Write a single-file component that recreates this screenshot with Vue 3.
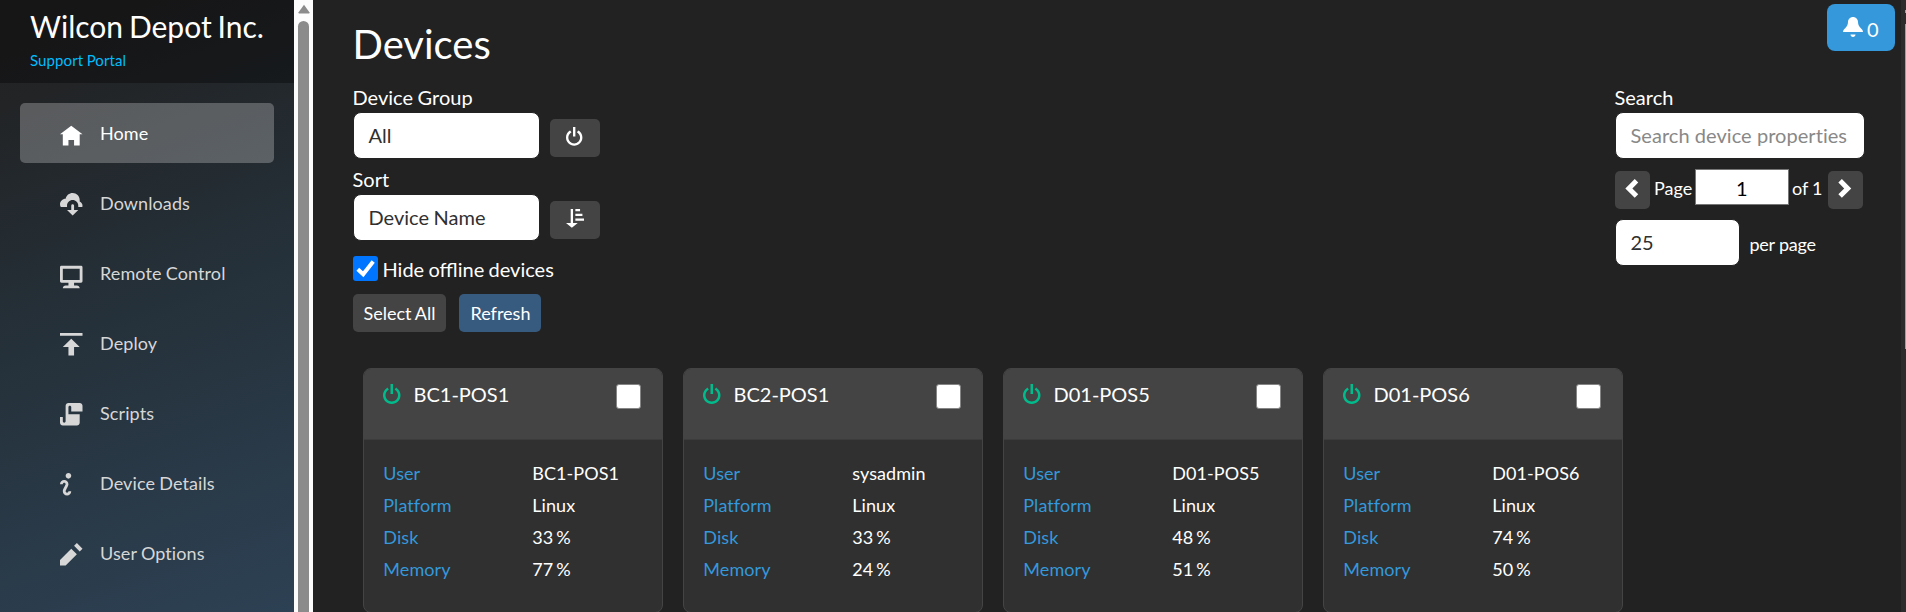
<script setup>
const icons = {
  home: 'M4 1l-4 3h1v4h2v-2h2v2h2v-4.03l1 .03-4-3z',
  download: 'M4.5 0c-1.21 0-2.27.86-2.5 2-1.1 0-2 .9-2 2 0 .37.11.71.28 1h2.22v-.5c0-1.1.9-2 2-2s2 .9 2 2v.5h1.41c.06-.16.09-.32.09-.5 0-.65-.42-1.29-1-1.5v-.5c0-1.38-1.12-2.5-2.5-2.5zm-.16 3.99a.5.5 0 0 0-.34.51v1.5h-1.5l2 2 2-2h-1.5v-1.5a.5.5 0 0 0-.66-.51z',
  monitor: 'M.34 1a.5.5 0 0 0-.34.5v5a.5.5 0 0 0 .5.5h2.5v1h-1c-.55 0-1 .45-1 1h6c0-.55-.45-1-1-1h-1v-1h2.5a.5.5 0 0 0 .5-.5v-5a.5.5 0 0 0-.5-.5h-7.16zm.66 1h6v4h-6v-4z',
  upload: 'M0 0v1h8v-1h-8zm4 2l-3 3h2v3h2v-3h2l-3-3z',
  script: 'M3 0c-.55 0-1 .45-1 1v5.5c0 .28-.22.5-.5.5s-.5-.22-.5-.5v-1.5h-1v2c0 .55.45 1 1 1h5c.55 0 1-.45 1-1v-3h-4v-2.5c0-.28.22-.5.5-.5s.5.22.5.5v1.5h4v-2c0-.55-.45-1-1-1h-4z',
  info: 'M3 0c-.55 0-1 .45-1 1s.45 1 1 1 1-.45 1-1-.45-1-1-1zm-1.5 2.5c-.83 0-1.5.67-1.5 1.5h1c0-.28.22-.5.5-.5s.5.22.5.5-1 1.64-1 2.5c0 .86.67 1.5 1.5 1.5s1.5-.67 1.5-1.5h-1c0 .28-.22.5-.5.5s-.5-.22-.5-.5c0-.36 1-1.84 1-2.5 0-.81-.67-1.5-1.5-1.5z',
  pencil: 'M6 0l-1 1 2 2 1-1-2-2zm-2 2l-4 4v2h2l4-4-2-2z',
  power: 'M3 0v4h1v-4h-1zm-1.28 1.44l-.38.31c-.81.64-1.34 1.64-1.34 2.75 0 1.93 1.57 3.5 3.5 3.5s3.5-1.57 3.5-3.5c0-1.11-.53-2.11-1.34-2.75l-.38-.31-.63.78.38.31c.58.46.97 1.17.97 1.97 0 1.39-1.11 2.5-2.5 2.5s-2.5-1.11-2.5-2.5c0-.8.36-1.51.94-1.97l.41-.31-.63-.78z',
  sort: 'M2 0v6h-2l2.5 2 2.5-2h-2v-6h-1zm2 0v1h2v-1h-2zm0 2v1h3v-1h-3zm0 2v1h4v-1h-4z',
  bell: 'M4 0c-1.1 0-2 .9-2 2 0 1.04-.52 1.98-1.34 2.66-.41.34-.66.82-.66 1.34h8c0-.52-.24-1-.66-1.34-.82-.68-1.34-1.62-1.34-2.66 0-1.1-.89-2-2-2zm-1 7c0 .55.45 1 1 1s1-.45 1-1h-2z',
  left: 'M5 0l-4 4 4 4 1.5-1.5-2.5-2.5 2.5-2.5-1.5-1.5z',
  right: 'M2.5 0l-1.5 1.5 2.5 2.5-2.5 2.5 1.5 1.5 4-4-4-4z'
}
const nav = [
  { text: 'Home', icon: 'home', active: true },
  { text: 'Downloads', icon: 'download' },
  { text: 'Remote Control', icon: 'monitor' },
  { text: 'Deploy', icon: 'upload' },
  { text: 'Scripts', icon: 'script' },
  { text: 'Device Details', icon: 'info' },
  { text: 'User Options', icon: 'pencil' }
]
const devices = [
  { name: 'BC1-POS1', user: 'BC1-POS1', disk: '33 %', memory: '77 %' },
  { name: 'BC2-POS1', user: 'sysadmin', disk: '33 %', memory: '24 %' },
  { name: 'D01-POS5', user: 'D01-POS5', disk: '48 %', memory: '51 %' },
  { name: 'D01-POS6', user: 'D01-POS6', disk: '74 %', memory: '50 %' }
]
</script>

<template>
  <div class="page">
    <aside class="sidebar">
      <header class="brand">
        <div class="org">Wilcon Depot Inc.</div>
        <div class="portal">Support Portal</div>
      </header>
      <nav class="nav">
        <a v-for="n in nav" :key="n.text" class="nav-item" :class="{ active: n.active }">
          <svg class="nav-icon" viewBox="0 0 8 8"><path :d="icons[n.icon]" /></svg>
          <span>{{ n.text }}</span>
        </a>
      </nav>
    </aside>
    <div class="side-scroll">
      <svg class="arrow" viewBox="0 0 12 10"><path d="M6 .8L11.4 8.2Q11.8 9.4 10.8 9.4H1.2Q.2 9.4.6 8.2Z" /></svg>
      <div class="thumb"></div>
    </div>
    <main class="main">
      <section class="filters">
        <h1>Devices</h1>
        <div class="label">Device Group</div>
        <div class="row">
          <div class="field">All</div>
          <button class="btn square"><svg class="ico" viewBox="0 0 8 8"><path :d="icons.power" /></svg></button>
        </div>
        <div class="label sort">Sort</div>
        <div class="row">
          <div class="field">Device Name</div>
          <button class="btn square"><svg class="ico" viewBox="0 0 8 8"><path :d="icons.sort" /></svg></button>
        </div>
        <div class="hide">
          <span class="check on"><svg viewBox="0 0 25 25"><path d="M4.8 13.2L10.2 18.2L20.2 5.6" /></svg></span>
          <span class="hide-text">Hide offline devices</span>
        </div>
        <div class="actions">
          <button class="btn select">Select All</button>
          <button class="btn refresh">Refresh</button>
        </div>
      </section>
      <section class="search">
        <div class="label">Search</div>
        <div class="field wide">Search device properties</div>
        <div class="pager">
          <button class="btn step"><svg class="ico" viewBox="0 0 8 8"><path :d="icons.left" /></svg></button>
          <span class="page-word">Page</span>
          <span class="page-num">1</span>
          <span class="page-of">of 1</span>
          <button class="btn step"><svg class="ico" viewBox="0 0 8 8"><path :d="icons.right" /></svg></button>
        </div>
        <div class="per-row">
          <div class="field per">25</div>
          <span class="per-text">per page</span>
        </div>
      </section>
      <section class="cards">
        <article v-for="d in devices" :key="d.name" class="card">
          <header class="card-head">
            <svg class="status" viewBox="0 0 8 8"><path :d="icons.power" /></svg>
            <span class="name">{{ d.name }}</span>
            <span class="check"></span>
          </header>
          <dl class="props">
            <dt>User</dt><dd>{{ d.user }}</dd>
            <dt>Platform</dt><dd>Linux</dd>
            <dt>Disk</dt><dd>{{ d.disk }}</dd>
            <dt>Memory</dt><dd>{{ d.memory }}</dd>
          </dl>
        </article>
      </section>
    </main>
    <div class="edge">
      <div class="edge-arrow"></div>
      <div class="edge-thumb"></div>
    </div>
    <button class="alerts"><svg viewBox="0 0 8 8"><path :d="icons.bell" /></svg><span>0</span></button>
  </div>
</template>

<style>
body { background: #222; }
</style>

<style scoped>
* { box-sizing: border-box; }
.page {
  position: relative;
  display: flex;
  width: 1906px;
  height: 612px;
  overflow: hidden;
  background: #222;
  color: #fff;
  font-family: Lato, sans-serif;
  font-size: 20px;
  font-variant-ligatures: none;
  word-spacing: -.5px;
  white-space: nowrap;
}
svg { display: block; fill: currentColor; }
.sidebar {
  width: 294px;
  height: 612px;
  flex: none;
  background: linear-gradient(160deg, #222 0%, #222426 15%, #25313a 50%, #2d4154 100%);
}
.brand { height: 83px; padding: 8px 0 0 30px; background: rgba(0, 0, 0, .35); }
.org { font-size: 30px; line-height: 37px; word-spacing: -1.8px; }
.portal { font-size: 15px; line-height: 20px; margin-top: 5px; letter-spacing: .1px; color: #00bcff; }
.nav { display: flex; flex-direction: column; gap: 10px; padding: 20px 20px 0; }
.nav-item {
  display: flex;
  align-items: center;
  height: 60px;
  padding-left: 39.5px;
  border-radius: 5px;
  color: #d7d7d7;
  font-size: 18px;
  letter-spacing: .1px;
  line-height: 60px;
}
.nav-item.active { color: #fff; background: rgba(255, 255, 255, .25); }
.nav-icon { width: 22.5px; height: 22.5px; margin-top: 2px; margin-right: 18px; overflow: visible; }
.side-scroll { width: 19px; flex: none; background: #fcfcfc; color: #8b8b8b; padding: 4px 4px 0; }
.arrow { width: 12px; height: 10px; margin-left: -.4px; }
.thumb { width: 11px; height: 620px; margin-top: 7px; border-radius: 6px; background: #8b8b8b; }
.main {
  flex: 1;
  display: grid;
  grid-template-columns: 1fr 250px;
  grid-template-rows: 358px auto;
  padding: 0 36px 0 40px;
}
h1 { margin: 0; font-size: 40px; font-weight: 400; line-height: 48px; padding-top: 19.5px; height: 82px; text-indent: -.5px; }
.label { height: 30px; line-height: 30px; text-indent: -.5px; }
.label.sort { margin-top: 5px; }
.row { display: flex; height: 47px; gap: 10px; }
.field {
  width: 187px;
  height: 47px;
  padding: 0 14.5px;
  line-height: 45px;
  border: 1px solid #222;
  border-radius: 8px;
  background: #fff;
  color: #303030;
}
.btn {
  display: flex;
  align-items: center;
  justify-content: center;
  height: 38px;
  border: 0;
  padding: 0;
  border-radius: 5px;
  background: #444;
  color: #fff;
  font: 18px Lato, sans-serif;
  word-spacing: -.6px;
}
.square { width: 50px; margin-top: 7px; }
.ico { width: 18.75px; height: 18.75px; margin-bottom: 3px; }
.hide { display: flex; align-items: center; gap: 5px; height: 25px; margin-top: 15px; }
.hide-text { font-variant-ligatures: normal; word-spacing: -.8px; margin-left: -.5px; }
.check { width: 25px; height: 25px; border-radius: 3px; background: #fff; border: 1px solid #767676; }
.check.on { border: 0; background: #0075ff; }
.check.on svg { width: 25px; height: 25px; fill: none; stroke: #fff; stroke-width: 4; }
.actions { display: flex; gap: 13px; margin-top: 13px; }
.btn.select { width: 93px; padding-bottom: 1px; }
.btn.refresh { width: 82px; padding: 0 0 1px 1px; background: #375a7f; }
.search { padding-top: 82px; }
.field.wide { width: 250px; color: #888; word-spacing: 0; letter-spacing: .05px; }
.pager { display: flex; height: 40px; margin-top: 10px; font-size: 18px; }
.step { width: 35px; margin-top: 2px; }
.page-word { width: 45px; padding-left: 4px; line-height: 39px; }
.page-num { width: 93.5px; height: 36px; background: #fff; border: 1px solid #767676; color: #000; line-height: 36px; text-align: center; font-size: 20px; }
.page-of { width: 39.5px; padding-left: 3.5px; line-height: 39px; }
.per-row { display: flex; margin-top: 10px; gap: 10px; font-size: 18px; line-height: 50px; }
.per-text { letter-spacing: -.25px; word-spacing: 0; margin-left: -.5px; }
.field.per { width: 125px; font-size: 20px; line-height: 45px; }
.cards { grid-column: 1 / 3; display: flex; gap: 20px; padding: 10px 0 0 10px; }
.card { width: 300px; height: 245px; border: 1px solid #444; border-radius: 8px; background: #303030; overflow: hidden; }
.card-head { display: flex; height: 71px; padding: 15px 21px 0 19px; background: #444; border-bottom: 1px solid #3c3c3c; }
.status { width: 20px; height: 20px; color: #00bc8c; }
.name { flex: 1; margin-left: 10.5px; margin-top: -5px; line-height: 30px; }
.card-head .check { border-color: #858585; }
.props { display: grid; grid-template-columns: 149px 1fr; grid-auto-rows: 32px; margin: 0; padding: 17px 0 0 19.3px; font-size: 18px; line-height: 32px; letter-spacing: .07px; word-spacing: -1.8px; }
dt { color: #3498db; }
dd { margin: 0; }
.edge { width: 5px; flex: none; background: #2c2c2c; padding-left: 4px; }
.edge-arrow { height: 3px; margin-top: 10px; background: #9f9f9f; }
.edge-thumb { height: 325px; margin-top: 11px; background: #9f9f9f; }
.alerts {
  position: absolute;
  left: 1827px;
  top: 4px;
  display: flex;
  gap: 4px;
  width: 68px;
  height: 47px;
  padding: 13px 0 0 16px;
  border: 0;
  border-radius: 8px;
  background: #3498db;
  color: #fff;
  font: 20px/24px Lato, sans-serif;
}
.alerts svg { width: 20px; height: 20px; }
</style>
